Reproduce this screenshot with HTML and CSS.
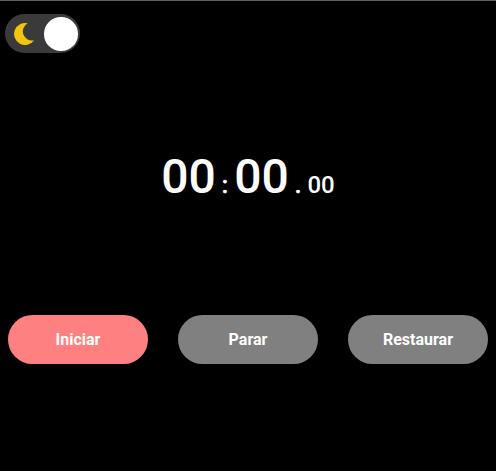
FILE: index.html
```html
<!DOCTYPE html>
<html lang="pt-BR">
<head>
<meta charset="utf-8">
<title>Cronômetro</title>
<link rel="stylesheet" href="styles.css">
</head>
<body>
<header class="topbar">
  <button class="toggle" aria-label="Tema">
    <svg class="moon" viewBox="0 0 24 24"><path d="M14.7 1.3A11 11 0 1 0 21 18.4A9.2 9.2 0 0 1 14.7 1.3Z"/></svg>
    <span class="knob"></span>
  </button>
</header>
<main class="timer">
  <span class="big">00</span><span class="sep">:</span><span class="big">00</span><span class="sep">.</span><span class="small">00</span>
</main>
<div class="actions">
  <button class="btn start">Iniciar</button>
  <button class="btn">Parar</button>
  <button class="btn">Restaurar</button>
</div>
</body>
</html>
```

FILE: styles.css
```css
* { box-sizing: border-box; }
body {
  margin: 0;
  height: 471px;
  background: #000;
  color: #fff;
  font-family: Roboto, "Liberation Sans", sans-serif;
  border-top: 1px solid #606060;
  overflow: hidden;
}
button { border: 0; font-family: inherit; }
.topbar { padding: 13.4px 0 0 5.3px; height: 53px; }
.toggle {
  display: flex;
  align-items: center;
  justify-content: space-between;
  width: 75px;
  height: 39px;
  padding: 0 2.8px 0 7.7px;
  border-radius: 20px;
  background: #3a3a3a;
}
.moon { width: 24px; height: 24px; fill: #f1c40f; }
.knob { width: 33.5px; height: 33.5px; border-radius: 50%; background: #fff; }
.timer {
  display: flex;
  align-items: baseline;
  justify-content: center;
  height: 261px;
  padding-top: 95px;
  font-weight: 500;
  font-size: 24px;
}
.big { font-size: 48px; line-height: 56px; }
.sep { margin: 0 6px; -webkit-text-stroke: 0.5px #fff; }
.actions { display: flex; justify-content: space-between; padding: 0 8px; }
.btn {
  width: 140px;
  height: 49px;
  border-radius: 25px;
  background: #808080;
  color: #fff;
  font-size: 16px;
  font-weight: 700;
}
.start { background: #ff8080; }
```
